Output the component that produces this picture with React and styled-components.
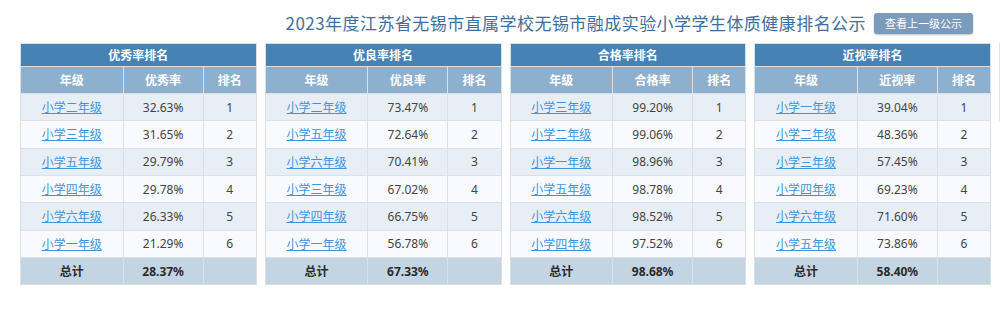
import React from "react";
import styled, { createGlobalStyle } from "styled-components";

const Global = createGlobalStyle`
  html, body { margin: 0; padding: 0; background: #fff; }
  body { font-family: "Noto Sans", "Noto Sans CJK SC", sans-serif; }
`;

const Page = styled.div`
  width: 1000px;
  overflow: hidden;
`;

const Header = styled.div`
  display: flex;
  justify-content: flex-end;
  align-items: center;
  height: 43px;
  padding-right: 27px;
  gap: 8px;
  box-sizing: border-box;
`;

const Title = styled.h1`
  margin: 0;
  font-family: "Noto Sans CJK SC", sans-serif;
  font-size: 17px;
  font-weight: 400;
  color: #3f6f9c;
  line-height: 21px;
  letter-spacing: 0.45px;
  margin-top: 1px;
`;

const Button = styled.button`
  height: 21px;
  width: 99px;
  padding: 0;
  border: none;
  border-radius: 3px;
  background: #7b9bbd;
  color: #fff;
  font-family: "Noto Sans CJK SC", sans-serif;
  font-size: 11px;
  box-shadow: 0 1px 2px rgba(0, 0, 0, 0.25);
  margin-top: 3px;
`;

const Row = styled.div`
  display: flex;
  align-items: flex-start;
  padding-left: 20px;
`;

const Cell = styled.div`
  width: 244.75px;
  flex: none;
`;

const Edge = styled.div`
  width: 1px;
  height: 78px;
  background: #e2e2e2;
  flex: none;
`;

const Table = styled.table`
  width: calc(100% - 8px);
  border-collapse: collapse;
  border: 1px solid #dcdfe3;
  font-size: 12px;
  table-layout: fixed;
  font-family: "Noto Sans", "Noto Sans CJK SC", sans-serif;
`;

const Caption = styled.th`
  background: #4682b4;
  color: #fff;
  font-weight: 700;
  height: 21.7px;
  padding: 0;
  border: 1px solid #dcdfe3;
  font-size: 12px;
  text-align: center;
`;

const HeadCell = styled.th`
  background: #8eb0cf;
  color: #fff;
  font-weight: 700;
  height: 26.3px;
  padding: 0;
  border: 1px solid #dcdfe3;
  font-size: 12px;
  text-align: center;
`;

const Tr = styled.tr`
  background: ${(p) => (p.$total ? "#c3d5e3" : p.$odd ? "#e8eef6" : "#f8faff")};
`;

const Td = styled.td`
  height: 26.33px;
  padding: 0;
  border: 1px solid #dcdfe3;
  text-align: center;
  color: ${(p) => (p.$bold ? "#2a2a2a" : "#444")};
  font-weight: ${(p) => (p.$bold ? 700 : 400)};
`;

const Link = styled.a`
  color: #3d95de;
  text-decoration: underline;
  font-family: "Noto Sans CJK SC", sans-serif;
  cursor: pointer;
`;

const TotalLabel = styled.span`
  font-family: "Noto Sans CJK SC", sans-serif;
`;

const tables = [
  {
    title: "优秀率排名",
    col: "优秀率",
    rows: [
      ["小学二年级", "32.63%"],
      ["小学三年级", "31.65%"],
      ["小学五年级", "29.79%"],
      ["小学四年级", "29.78%"],
      ["小学六年级", "26.33%"],
      ["小学一年级", "21.29%"],
    ],
    total: "28.37%",
  },
  {
    title: "优良率排名",
    col: "优良率",
    rows: [
      ["小学二年级", "73.47%"],
      ["小学五年级", "72.64%"],
      ["小学六年级", "70.41%"],
      ["小学三年级", "67.02%"],
      ["小学四年级", "66.75%"],
      ["小学一年级", "56.78%"],
    ],
    total: "67.33%",
  },
  {
    title: "合格率排名",
    col: "合格率",
    rows: [
      ["小学三年级", "99.20%"],
      ["小学二年级", "99.06%"],
      ["小学一年级", "98.96%"],
      ["小学五年级", "98.78%"],
      ["小学六年级", "98.52%"],
      ["小学四年级", "97.52%"],
    ],
    total: "98.68%",
  },
  {
    title: "近视率排名",
    col: "近视率",
    rows: [
      ["小学一年级", "39.04%"],
      ["小学二年级", "48.36%"],
      ["小学三年级", "57.45%"],
      ["小学四年级", "69.23%"],
      ["小学六年级", "71.60%"],
      ["小学五年级", "73.86%"],
    ],
    total: "58.40%",
  },
];

function RankTable({ data }) {
  return (
    <Table>
      <colgroup>
        <col style={{ width: "43.5%" }} />
        <col style={{ width: "34%" }} />
        <col style={{ width: "22.5%" }} />
      </colgroup>
      <thead>
        <tr>
          <Caption colSpan={3}>{data.title}</Caption>
        </tr>
        <tr>
          <HeadCell>年级</HeadCell>
          <HeadCell>{data.col}</HeadCell>
          <HeadCell>排名</HeadCell>
        </tr>
      </thead>
      <tbody>
        {data.rows.map((r, i) => (
          <Tr key={i} $odd={i % 2 === 0}>
            <Td>
              <Link>{r[0]}</Link>
            </Td>
            <Td>{r[1]}</Td>
            <Td>{i + 1}</Td>
          </Tr>
        ))}
        <Tr $total>
          <Td $bold>
            <TotalLabel>总计</TotalLabel>
          </Td>
          <Td $bold>{data.total}</Td>
          <Td />
        </Tr>
      </tbody>
    </Table>
  );
}

export default function App() {
  return (
    <Page>
      <Global />
      <Header>
        <Title>2023年度江苏省无锡市直属学校无锡市融成实验小学学生体质健康排名公示</Title>
        <Button>查看上一级公示</Button>
      </Header>
      <Row>
        {tables.map((t) => (
          <Cell key={t.title}>
            <RankTable data={t} />
          </Cell>
        ))}
        <Edge />
      </Row>
    </Page>
  );
}
